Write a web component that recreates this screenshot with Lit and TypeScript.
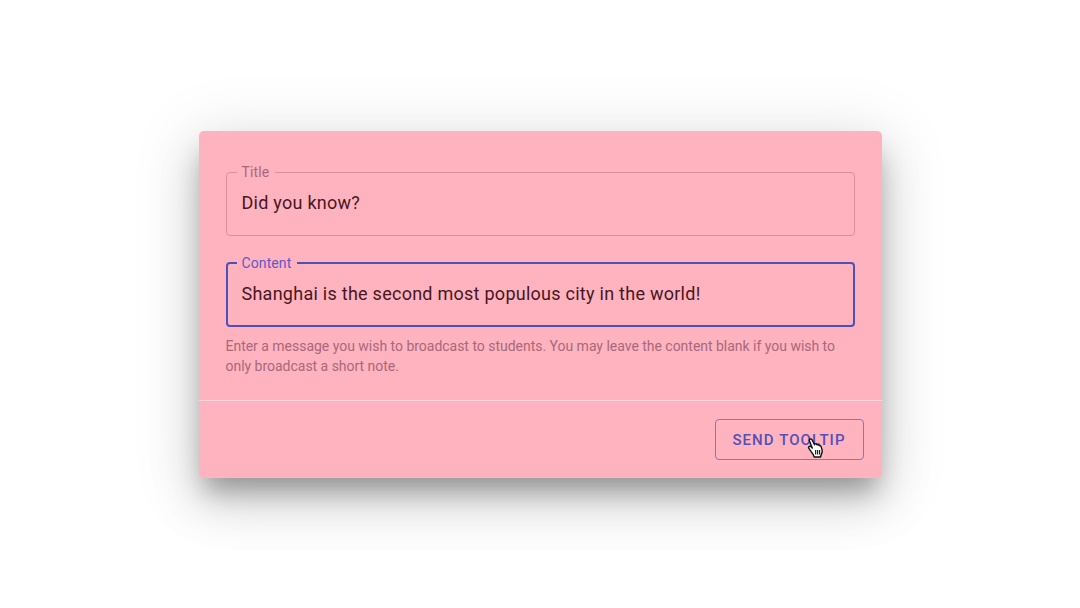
import { LitElement, html, css } from "lit";
import { customElement } from "lit/decorators.js";

@customElement("app-root")
export class AppRoot extends LitElement {
  static styles = css`
    :host {
      display: flex;
      justify-content: center;
      align-items: flex-start;
      width: 1080px;
      height: 608px;
      padding-top: 131px;
      box-sizing: border-box;
      background: #fff;
      overflow: hidden;
      font-family: Roboto, "Liberation Sans", sans-serif;
    }
    .card {
      width: 683px;
      height: 347px;
      box-sizing: border-box;
      background: #ffb3bf;
      border-radius: 5px;
      box-shadow: 0 18px 24px -6px rgba(0, 0, 0, 0.3), 0 24px 50px 3px rgba(0, 0, 0, 0.13), 0 9px 64px 12px rgba(0, 0, 0, 0.08);
      display: flex;
      flex-direction: column;
    }
    .body {
      height: 270px;
      box-sizing: border-box;
      padding: 33px 27px 0;
      border-bottom: 1px solid #ffd6dc;
      display: flex;
      flex-direction: column;
    }
    fieldset {
      margin: 0;
      padding: 11px 15px 0;
      min-width: 0;
      height: 72px;
      box-sizing: border-box;
      border: 1px solid #d8909e;
      border-radius: 4px;
    }
    fieldset + fieldset {
      margin-top: 19px;
      border: 2px solid #4d50b6;
      padding: 11px 14px 0;
    }
    legend {
      margin-left: -5px;
      padding: 0 6px 0 5px;
      font-size: 14px;
      line-height: 16px;
      letter-spacing: 0.1px;
      color: #a8687a;
    }
    .focused legend {
      color: #6458c2;
    }
    .value {
      display: block;
      font-size: 18px;
      letter-spacing: 0.26px;
      line-height: 24px;
      color: #47171f;
    }
    .helper {
      margin: 9px 0 0;
      font-size: 14px;
      line-height: 20px;
      letter-spacing: -0.02px;
      color: #a8687a;
    }
    .footer {
      flex: 1;
      display: flex;
      justify-content: flex-end;
      padding: 18px 18px 0 0;
    }
    .btn {
      position: relative;
      width: 149px;
      height: 41px;
      box-sizing: border-box;
      border: 1px solid #7f78cc;
      border-radius: 4px;
      background: transparent;
      padding: 0;
      font: 500 15px Roboto, sans-serif;
      letter-spacing: 1.08px;
      color: #564fb4;
    }
    .cursor {
      position: absolute;
      left: 91px;
      top: 17px;
      width: 16px;
      height: 22px;
    }
  `;

  render() {
    return html`
      <div class="card">
        <div class="body">
          <fieldset>
            <legend>Title</legend>
            <span class="value">Did you know?</span>
          </fieldset>
          <fieldset class="focused">
            <legend>Content</legend>
            <span class="value">Shanghai is the second most populous city in the world!</span>
          </fieldset>
          <p class="helper">
            Enter a message you wish to broadcast to students. You may leave the content blank if you wish to
            only broadcast a short note.
          </p>
        </div>
        <div class="footer">
          <button class="btn">
            SEND TOOLTIP
            <svg class="cursor" viewBox="0 0 17 22">
              <path
                d="M3.2 1.6c1-.6 2 0 2.4 1l2.4 5 .3-.9c.7-.6 1.7-.3 2.1.4l.3.6c.6-.7 1.6-.4 2 .3l.3.6c.7-.4 1.5-.1 1.9.7l1 3.3c.5 1.8.2 3.400-.6 4.800l-.9 3.200H7.600l-.8-2.200L2 11.500c-.6-.9-.3-1.900.5-2.300.7-.3 1.500 0 2 .6l1.100 1.300L2.600 3.600c-.3-.8-.1-1.600.6-2z"
                fill="#fff"
                stroke="#111"
                stroke-width="1.5"
                stroke-linejoin="round"
              />
              <path d="M9.200 13v5M11.300 13v5M13.400 13v5" stroke="#111" stroke-width="1.200" fill="none" />
            </svg>
          </button>
        </div>
      </div>
    `;
  }
}
